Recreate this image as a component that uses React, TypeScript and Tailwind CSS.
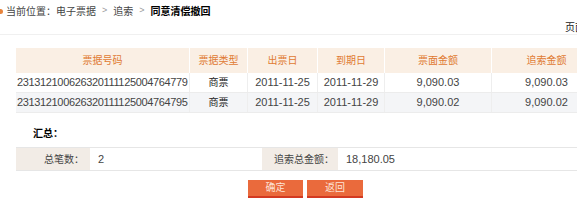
const COLS = [
  { title: "票据号码", w: "w-[174px]" },
  { title: "票据类型", w: "w-[58px]" },
  { title: "出票日", w: "w-[70px]" },
  { title: "到期日", w: "w-[67px]" },
  { title: "票面金额", w: "w-[107px]" },
  { title: "追索金额", w: "w-[110px]" },
];

const ROWS = [
  ["231312100626320111125004764779", "商票", "2011-11-25", "2011-11-29", "9,090.03", "9,090.03"],
  ["231312100626320111125004764795", "商票", "2011-11-25", "2011-11-29", "9,090.02", "9,090.02"],
];

export default function App() {
  return (
    <div className="w-[577px] h-[200px] overflow-hidden bg-white font-['Liberation_Sans','Noto_Sans_CJK_SC',sans-serif] text-[11px] text-[#444]">
      <div className="w-[620px]">
        <div className="h-[21px] flex items-center gap-[3px] pt-[1px]">
          <span className="w-[3px] h-[5px] bg-[#e8843c] rounded-r-full" />
          <span className="text-[10px]">当前位置：电子票据</span>
          <span className="text-[9px] text-[#999] px-[3px]">&gt;</span>
          <span className="text-[10px]">追索</span>
          <span className="text-[9px] text-[#999] px-[3px]">&gt;</span>
          <span className="text-[10px] font-bold text-black">同意清偿撤回</span>
        </div>
        <div className="h-[14px] flex justify-end items-end pr-[15px] border-b border-[#f0f0f0]">
          <span className="text-[10px] text-[#222] leading-[12px]">页面设置</span>
        </div>
        <div className="pl-[16px] pt-[13px]">
          <div className="flex h-[25px] bg-[#faefe4] text-[#e07a32] text-[10px]">
            {COLS.map((c) => (
              <div key={c.title} className={`${c.w} flex items-center justify-center border-r border-white`}>
                {c.title}
              </div>
            ))}
          </div>
          {ROWS.map((r, i) => (
            <div
              key={i}
              className={`flex h-[20px] border-b border-[#ececec] ${i === 1 ? "bg-[#f4f5f7]" : "bg-white"}`}
            >
              {r.map((v, j) => (
                <div
                  key={j}
                  className={`${COLS[j].w} flex items-center border-r border-[#eeeeee] ${
                    j === 0 ? "justify-start pl-[1px] tracking-[-0.35px]" : "justify-center"
                  } ${j === 1 ? "text-[10px] text-[#222]" : ""}`}
                >
                  {v}
                </div>
              ))}
            </div>
          ))}
        </div>
        <div className="pl-[33px] pt-[13px] h-[34px] text-[10px] font-bold text-black">汇总：</div>
        <div className="ml-[16px] flex h-[24px] border-y border-[#e6e6e6]">
          <div className="w-[74px] bg-[#f2ece6] flex items-center justify-end pr-[6px] text-[10px]">总笔数：</div>
          <div className="w-[172px] flex items-center pl-[8px]">2</div>
          <div className="w-[76px] bg-[#f2ece6] flex items-center justify-end pr-[4px] text-[10px]">追索总金额：</div>
          <div className="flex-1 flex items-center pl-[8px]">18,180.05</div>
        </div>
        <div className="flex gap-[4px] pl-[248px] pt-[9px]">
          <button className="w-[55px] h-[18px] bg-[#ea6a3c] border-b-2 border-[#d33a22] text-[#fde4d8] text-[10px] leading-none">
            确定
          </button>
          <button className="w-[56px] h-[18px] bg-[#ea6a3c] border-b-2 border-[#d33a22] text-[#fde4d8] text-[10px] leading-none">
            返回
          </button>
        </div>
      </div>
    </div>
  );
}
